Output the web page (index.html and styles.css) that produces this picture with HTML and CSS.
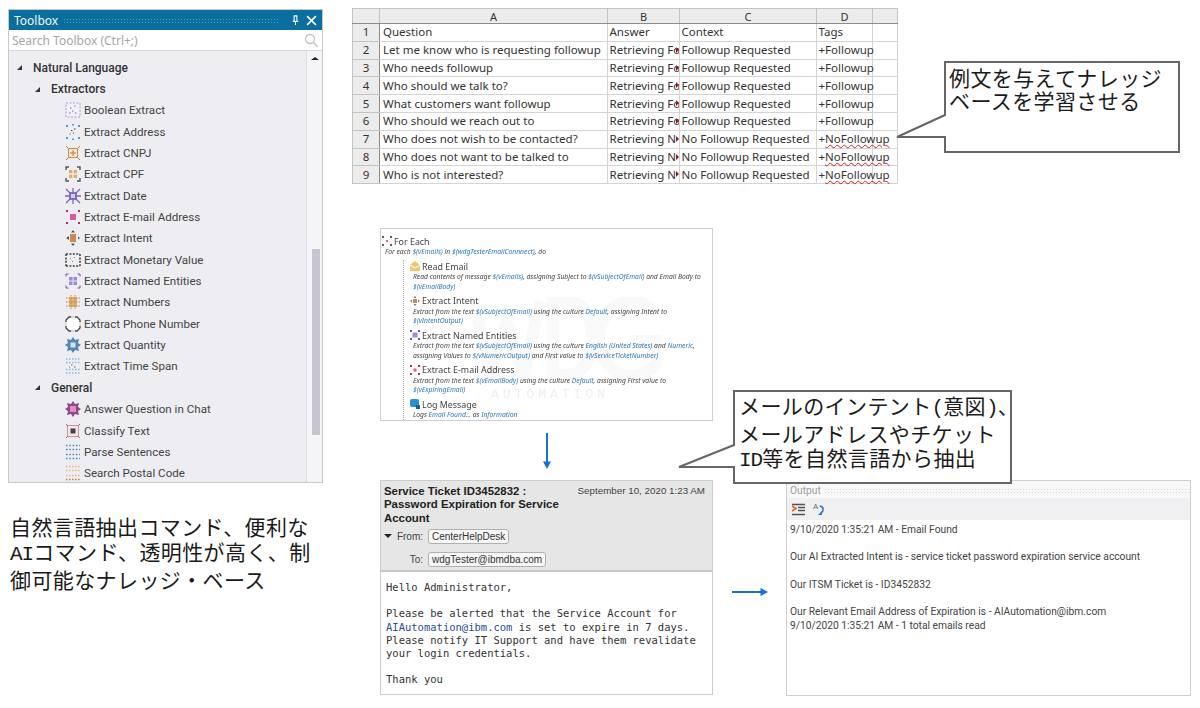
FILE: index.html
```html
<!DOCTYPE html>
<html lang="ja">
<head>
    <meta charset="UTF-8">
    <meta name="viewport" content="width=device-width, initial-scale=1.0">
    <title>Natural Language Toolbox</title>
    <link rel="stylesheet" href="styles.css">
</head>
<body>
<div class="slide">

    <!-- Toolbox window -->
    <section class="toolbox">
        <div class="tb-title">
            <span>Toolbox</span>
            <span class="tb-grip"></span>
            <svg class="tb-btn" viewBox="0 0 10 12"><path d="M3 1h4M3.5 1v6M6.5 1v6M2 7h6M5 7v4" fill="none" stroke="#fff" stroke-width="1.2"/></svg>
            <svg class="tb-btn" viewBox="0 0 10 10"><path d="M1 1l8 8M9 1l-8 8" fill="none" stroke="#fff" stroke-width="1.4"/></svg>
        </div>
        <div class="tb-search">
            <span>Search Toolbox (Ctrl+;)</span>
            <svg class="tb-lens" viewBox="0 0 14 14"><circle cx="6" cy="6" r="4.5" fill="none" stroke="#c4c4c4" stroke-width="1.3"/><path d="M9.5 9.5l4 4" stroke="#c4c4c4" stroke-width="1.5"/></svg>
        </div>
        <div class="tb-body">
            <div class="tb-list">
                <div class="row l1"><i class="tw"></i>Natural Language</div>
                <div class="row l2"><i class="tw"></i>Extractors</div>
                <div class="row l3"><svg class="ico" viewBox="0 0 16 16"><rect x="1" y="1" width="14" height="14" fill="#f3f0fa" stroke="#a99bd6" stroke-dasharray="2 1.5"/><path d="M5 6h1.5M9 4h1.5M7 9h1.5M10 11h1.5M4 11h1.5" stroke="#7b68b8"/></svg>Boolean Extract</div>
                <div class="row l3"><svg class="ico" viewBox="0 0 16 16"><path d="M1 1h2v2H1zM13 1h2v2h-2zM1 13h2v2H1zM13 13h2v2h-2zM7 0h2v1.5H7zM7 14.5h2V16H7z" fill="#4a9ad4"/><path d="M6 6h1.5v1H6zM9 4.5h1.5v1H9zM8 8.5h1v1H8zM4.5 9.5h1v1h-1z" fill="#444"/></svg>Extract Address</div>
                <div class="row l3"><svg class="ico" viewBox="0 0 16 16"><rect x="3.5" y="3.5" width="9" height="9" fill="#f5e6d2" stroke="#c98b4a"/><path d="M1 1l2 2M15 1l-2 2M1 15l2-2M15 15l-2-2M8 5v6M5 8h6" stroke="#b9793a"/></svg>Extract CNPJ</div>
                <div class="row l3"><svg class="ico" viewBox="0 0 16 16"><rect x="4" y="4" width="8" height="8" fill="#dcae72"/><path d="M8 4v8M4 8h8" stroke="#fff"/><path d="M1 4V1h3M12 1h3v3M1 12v3h3M15 12v3h-3" fill="none" stroke="#555" stroke-width="1.4"/></svg>Extract CPF</div>
                <div class="row l3"><svg class="ico" viewBox="0 0 16 16"><rect x="4" y="4" width="8" height="8" fill="#8b76c6"/><path d="M1 1l14 14M15 1L1 15M8 0v16M0 8h16" stroke="#7a63bd" stroke-width="1.3"/><path d="M6 6h4v4H6z" fill="#d6cdf0"/></svg>Extract Date</div>
                <div class="row l3"><svg class="ico" viewBox="0 0 16 16"><rect x="5" y="5" width="6" height="6" fill="#d2609c"/><path d="M1 1h2v2H1zM13 1h2v2h-2zM1 13h2v2H1zM13 13h2v2h-2z" fill="#a8325f"/></svg>Extract E-mail Address</div>
                <div class="row l3"><svg class="ico" viewBox="0 0 16 16"><rect x="5" y="4" width="6" height="8" fill="#c98b55"/><path d="M8 0l2 2.5H6zM8 16l2-2.5H6zM1 8l3-2v4zM15 8l-2-1.5v3z" fill="#555"/></svg>Extract Intent</div>
                <div class="row l3"><svg class="ico" viewBox="0 0 16 16"><path d="M1 2h14M15 2v12M1 14h14M1 2v12" fill="none" stroke="#444" stroke-width="1.6" stroke-dasharray="2 1.4"/><path d="M5 6h1v1H5zM9 5h1v1H9zM7 9h1v1H7z" fill="#888"/></svg>Extract Monetary Value</div>
                <div class="row l3"><svg class="ico" viewBox="0 0 16 16"><rect x="4" y="4" width="8" height="8" fill="#9e8ed6"/><path d="M8 4v8M4 8h8" stroke="#e8e2f7"/><path d="M1 1h2.5M1 1v2.5M15 1h-2.5M15 1v2.5M1 15h2.5M1 15v-2.5M15 15h-2.5M15 15v-2.5" stroke="#6a52b3"/></svg>Extract Named Entities</div>
                <div class="row l3"><svg class="ico" viewBox="0 0 16 16"><rect x="4" y="3" width="8" height="10" fill="#e2b377"/><path d="M1 4h14M1 8h14M1 12h14M6 1v14M10 1v14" stroke="#c48a3f" stroke-dasharray="1.5 1"/></svg>Extract Numbers</div>
                <div class="row l3"><svg class="ico" viewBox="0 0 16 16"><path d="M4 1h8l3 3v8l-3 3H4l-3-3V4z" fill="#fff" stroke="#444" stroke-width="1.3"/><path d="M6 1h4M6 15h4M1 6v4M15 6v4" stroke="#fff" stroke-width="1.5"/></svg>Extract Phone Number</div>
                <div class="row l3"><svg class="ico" viewBox="0 0 16 16"><path d="M8 0l2 3 4-1-1 4 3 2-3 2 1 4-4-1-2 3-2-3-4 1 1-4-3-2 3-2-1-4 4 1z" fill="#4f86b5"/><rect x="5.5" y="5.5" width="5" height="5" fill="#d6e6f3"/></svg>Extract Quantity</div>
                <div class="row l3"><svg class="ico" viewBox="0 0 16 16"><path d="M1 1h14M1 4.5h14M1 11.5h14M1 15h14" stroke="#8fb9dc" stroke-width="1.4" stroke-dasharray="1.5 1.5"/><path d="M6 7h1.5M9 9h1.5M4 9h1" stroke="#777"/></svg>Extract Time Span</div>
                <div class="row l2"><i class="tw"></i><span>General</span></div>
                <div class="row l3"><svg class="ico" viewBox="0 0 16 16"><path d="M8 0l2 3 4-1-1 4 3 2-3 2 1 4-4-1-2 3-2-3-4 1 1-4-3-2 3-2-1-4 4 1z" fill="#8a4a90"/><rect x="5" y="5" width="6" height="6" fill="#e58cb8"/></svg>Answer Question in Chat</div>
                <div class="row l3"><svg class="ico" viewBox="0 0 16 16"><rect x="2.5" y="2.5" width="11" height="11" fill="#f7e7ea" stroke="#cf8fa0"/><rect x="5.5" y="5.5" width="5" height="5" fill="#444"/><path d="M1 1l2 2M15 1l-2 2M1 15l2-2M15 15l-2-2" stroke="#a8607a"/></svg>Classify Text</div>
                <div class="row l3"><svg class="ico" viewBox="0 0 16 16"><path d="M1 1.5h14M1 5.5h14M1 10.5h14M1 14.5h14" stroke="#4a82b8" stroke-width="1.4" stroke-dasharray="1.5 1.8"/></svg>Parse Sentences</div>
                <div class="row l3"><svg class="ico" viewBox="0 0 16 16"><path d="M1 1.5h14M1 5.5h14M1 10.5h14" stroke="#e0b98a" stroke-width="1.3" stroke-dasharray="1.5 1.5"/><path d="M1 14.5h14" stroke="#c07f38" stroke-width="1.4" stroke-dasharray="1.5 1.5"/></svg>Search Postal Code</div>
            </div>
            <div class="tb-scroll">
                <i class="sc-up"></i>
                <div class="sc-thumb"></div>
            </div>
        </div>
    </section>

    <p class="caption">自然言語抽出コマンド、便利な<br><span class="lat">AI</span>コマンド、透明性が高く、制<br>御可能なナレッジ・ベース</p>

    <!-- Knowledge base spreadsheet -->
    <table class="sheet">
        <colgroup>
            <col class="c-n"><col class="c-a"><col class="c-b"><col class="c-c"><col class="c-d"><col class="c-e">
        </colgroup>
        <tr class="head"><th></th><th>A</th><th>B</th><th>C</th><th>D</th><th></th></tr>
        <tr><th>1</th><td>Question</td><td>Answer</td><td>Context</td><td>Tags</td><td></td></tr>
        <tr><th>2</th><td>Let me know who is requesting followup</td><td class="cut">Retrieving Fo</td><td>Followup Requested</td><td>+Followup</td><td></td></tr>
        <tr><th>3</th><td>Who needs followup</td><td class="cut">Retrieving Fo</td><td>Followup Requested</td><td>+Followup</td><td></td></tr>
        <tr><th>4</th><td>Who should we talk to?</td><td class="cut">Retrieving Fo</td><td>Followup Requested</td><td>+Followup</td><td></td></tr>
        <tr><th>5</th><td>What customers want followup</td><td class="cut">Retrieving Fo</td><td>Followup Requested</td><td>+Followup</td><td></td></tr>
        <tr><th>6</th><td>Who should we reach out to</td><td class="cut">Retrieving Fo</td><td>Followup Requested</td><td>+Followup</td><td></td></tr>
        <tr><th>7</th><td>Who does not wish to be contacted?</td><td class="cut">Retrieving N</td><td>No Followup Requested</td><td>+<span class="typo">NoFollowup</span></td><td></td></tr>
        <tr><th>8</th><td>Who does not want to be talked to</td><td class="cut">Retrieving N</td><td>No Followup Requested</td><td>+<span class="typo">NoFollowup</span></td><td></td></tr>
        <tr><th>9</th><td>Who is not interested?</td><td class="cut">Retrieving N</td><td>No Followup Requested</td><td>+<span class="typo">NoFollowup</span></td><td></td></tr>
    </table>

    <div class="callout call-a">
        <svg class="call-shape" width="234" height="90"><path d="M0 0H234V90H0V75L-48 75L0 53Z"/></svg>
        <p>例文を与えてナレッジ<br>ベースを学習させる</p>
    </div>

    <!-- Workflow steps -->
    <section class="flow">
        <svg class="wm-logo" width="190" height="84" viewBox="0 0 190 84"><path d="M3 4l16 74 17-52 17 52 16-74M82 4v74h14c34 0 34-74 0-74zM186 16c-24-24-58-8-58 26s36 50 58 24V44h-24" fill="none" stroke="#f9f9f9" stroke-width="12"/></svg>
        <div class="wm">AUTOMATION</div>
        <div class="step">
            <h4><svg class="ico-s" viewBox="0 0 10 10"><path d="M0 0h2v2H0zM8 0h2v2H8zM0 8h2v2H0zM8 8h2v2H8z" fill="#5a5a8a"/><path d="M4 4h2v2H4z" fill="#d2609c"/></svg>For Each</h4>
            <p>For each <b>$(vEmails)</b> in <b>$(wdgTesterEmailConnnect)</b>, do</p>
        </div>
        <div class="steps">
            <div class="step">
                <h4><svg class="ico-s" viewBox="0 0 10 10"><path d="M0 4l5-4 5 4v6H0z" fill="#f2c46d"/><path d="M0 4l5 3 5-3" fill="none" stroke="#fff"/></svg>Read Email</h4>
                <p>Read contents of message <b>$(vEmails)</b>, assigning Subject to <b>$(vSubjectOfEmail)</b> and Email Body to<br><b>$(vEmailBody)</b></p>
            </div>
            <div class="step">
                <h4><svg class="ico-s" viewBox="0 0 10 10"><rect x="3" y="3" width="4" height="4" fill="#c98b55"/><path d="M5 0l1.5 2h-3zM5 10l1.5-2h-3zM0 5l2-1.5v3zM10 5L8 3.5v3z" fill="#777"/></svg>Extract Intent</h4>
                <p>Extract from the text <b>$(vSubjectOfEmail)</b> using the culture <b>Default</b>, assigning Intent to<br><b>$(vIntentOutput)</b></p>
            </div>
            <div class="step">
                <h4><svg class="ico-s" viewBox="0 0 10 10"><rect x="2.5" y="2.5" width="5" height="5" fill="#9e8ed6"/><path d="M0 0h2v2H0zM8 0h2v2H8zM0 8h2v2H0zM8 8h2v2H8z" fill="#6a52b3"/></svg>Extract Named Entities</h4>
                <p>Extract from the text <b>$(vSubjectOfEmail)</b> using the culture <b>English (United States)</b> and <b>Numeric</b>,<br>assigning Values to <b>$(vNumericOutput)</b> and First value to <b>$(vServiceTicketNumber)</b></p>
            </div>
            <div class="step">
                <h4><svg class="ico-s" viewBox="0 0 10 10"><rect x="3.5" y="3.5" width="3" height="3" fill="#d2609c"/><path d="M0 0h2v2H0zM8 0h2v2H8zM0 8h2v2H0zM8 8h2v2H8z" fill="#a8325f"/></svg>Extract E-mail Address</h4>
                <p>Extract from the text <b>$(vEmailBody)</b> using the culture <b>Default</b>, assigning First value to<br><b>$(vExpiringEmail)</b></p>
            </div>
            <div class="step">
                <h4><svg class="ico-s" viewBox="0 0 10 10"><rect width="9" height="8" rx="2" fill="#2a8fd0"/><rect x="6" y="6" width="4" height="4" fill="#1b5f96"/></svg>Log Message</h4>
                <p>Logs <b>Email Found...</b> as <b>Information</b></p>
            </div>
        </div>
    </section>

    <svg class="arrow arrow-down" width="12" height="36" viewBox="0 0 12 36"><path d="M6 0V30" stroke="#1a6fd0" stroke-width="2"/><path d="M2 28.5h8L6 36z" fill="#1a6fd0"/></svg>
    <svg class="arrow arrow-right" width="36" height="10" viewBox="0 0 36 10"><path d="M0 5H30" stroke="#1a6fd0" stroke-width="2"/><path d="M28.5 1v8L36 5z" fill="#1a6fd0"/></svg>

    <!-- Email preview -->
    <section class="mail">
        <div class="mail-head">
            <div class="mail-top">
                <h3>Service Ticket ID3452832 :<br>Password Expiration for Service<br>Account</h3>
                <span class="mail-date">September 10, 2020 1:23 AM</span>
            </div>
            <div class="mail-line from"><i class="drop"></i><label>From:</label><span class="chip">CenterHelpDesk</span></div>
            <div class="mail-line to"><label>To:</label><span class="chip">wdgTester@ibmdba.com</span></div>
        </div>
        <div class="mail-body">
            <p>Hello Administrator,</p>
            <p>Please be alerted that the Service Account for<br><a>AIAutomation@ibm.com</a> is set to expire in 7 days.<br>Please notify IT Support and have them revalidate<br>your login credentials.</p>
            <p>Thank you</p>
        </div>
    </section>

    <!-- Output window -->
    <section class="output">
        <div class="out-title"><span>Output</span><span class="out-grip"></span></div>
        <div class="out-tools">
            <svg width="13" height="13" viewBox="0 0 13 13"><path d="M0 1.5h13M6 4.5h7M6 7.5h7M0 11.5h13" stroke="#555" stroke-width="1.5"/><path d="M0 3l4 2.5L0 8" fill="none" stroke="#d2691e" stroke-width="1.5"/></svg>
            <svg width="12" height="14" viewBox="0 0 12 14"><text x="0" y="7" class="out-a">A</text><path d="M7 4c4 1 4 5 1 7" fill="none" stroke="#2a78c0" stroke-width="1.5"/><path d="M9 9v4H5z" fill="#2a78c0"/></svg>
        </div>
        <div class="out-text">
            <p>9/10/2020 1:35:21 AM - Email Found</p>
            <p>Our AI Extracted Intent is - service ticket password expiration service account</p>
            <p>Our ITSM Ticket is - ID3452832</p>
            <p class="tight">Our Relevant Email Address of Expiration is - AIAutomation@ibm.com</p>
            <p>9/10/2020 1:35:21 AM - 1 total emails read</p>
        </div>
    </section>

    <div class="callout call-b">
        <svg class="call-shape" width="277" height="92"><path d="M0 0H277V92H0V76L-55 76L0 54Z"/></svg>
        <p>メールのインテント<span class="lat">(</span>意図<span class="lat">)</span>、<br>メールアドレスやチケット<br><span class="lat">ID</span>等を自然言語から抽出</p>
    </div>

</div>
</body>
</html>
```

FILE: styles.css
```css
* {
    box-sizing: border-box;
}

body {
    margin: 0;
    background-color: white;
}

p, h3, h4 {
    margin: 0;
    font-weight: normal;
}

.slide {
    position: relative;
    width: 1200px;
    height: 708px;
    overflow: hidden;
    font-family: "Noto Sans", sans-serif;
    color: #333;
}

/* Toolbox */
.toolbox {
    position: absolute;
    left: 8px;
    top: 9px;
    width: 315px;
    height: 474px;
    display: flex;
    flex-direction: column;
    border: 1px solid #c8c8cc;
    background-color: #eeeef2;
}

.tb-title {
    display: flex;
    align-items: center;
    gap: 5px;
    height: 20px;
    padding: 0 5px;
    background-color: #0a6f9e;
    color: #f2f8fb;
    font-size: 12px;
}

.tb-grip {
    flex: 1;
    height: 5px;
    margin-right: 5px;
    background-image: radial-gradient(#5a9cbc 40%, transparent 45%);
    background-size: 3px 3px;
}

.tb-btn {
    width: 11px;
    height: 11px;
}

.tb-search {
    display: flex;
    align-items: center;
    justify-content: space-between;
    height: 21px;
    padding: 0 4px 0 3px;
    background-color: white;
    border-bottom: 1px solid #d8d8dc;
    color: #a6a6a6;
    font-size: 12px;
}

.tb-lens {
    width: 14px;
    height: 14px;
}

.tb-body {
    flex: 1;
    display: flex;
    min-height: 0;
}

.tb-list {
    flex: 1;
    padding-top: 6px;
    overflow: hidden;
    font-family: Roboto, sans-serif;
    font-size: 12px;
}

.row {
    display: flex;
    align-items: center;
    height: 21.35px;
    white-space: nowrap;
}

.l1 {
    padding-left: 8px;
    font-weight: 500;
}

.l2 {
    padding-left: 26px;
    font-weight: 500;
}

.l3 {
    padding-left: 56px;
    font-size: 11.6px;
    color: #444;
}

.tw {
    width: 0;
    height: 0;
    margin-right: 11px;
    border-left: 5px solid transparent;
    border-bottom: 5px solid #333;
}

.ico {
    flex: none;
    width: 16px;
    height: 16px;
    margin-right: 3px;
}

.tb-scroll {
    width: 16px;
    display: flex;
    flex-direction: column;
    align-items: center;
    background-color: #f5f5f7;
    border-left: 1px solid #dcdce0;
}

.sc-up {
    margin-top: 6px;
    border-left: 4px solid transparent;
    border-right: 4px solid transparent;
    border-bottom: 3px solid #222;
}

.sc-thumb {
    width: 8px;
    height: 186px;
    margin-top: 189px;
    margin-left: 2px;
    background-color: #c6c6d0;
}

/* Japanese captions */
.caption,
.callout p {
    font-family: "Noto Sans CJK JP", sans-serif;
    font-size: 21px;
    letter-spacing: 0.4px;
    color: #1a1a1a;
    white-space: nowrap;
}

.lat {
    font-family: "Liberation Mono", monospace;
    letter-spacing: -1px;
}

.caption {
    position: absolute;
    left: 10px;
    top: 514px;
    line-height: 25px;
}

.callout {
    position: absolute;
}

.call-shape {
    position: absolute;
    left: 0;
    top: 0;
    overflow: visible;
}

.call-shape path {
    fill: white;
    stroke: #666;
    stroke-width: 2;
}

.callout p {
    position: relative;
}

.call-a {
    left: 945px;
    top: 62px;
    width: 234px;
    height: 90px;
    padding: 4px 0 0 4px;
}

.call-a p {
    line-height: 23px;
}

.call-b {
    left: 734px;
    top: 391px;
    width: 277px;
    height: 92px;
    padding: 2px 0 0 5px;
}

.call-b p {
    line-height: 24px;
}

/* Spreadsheet */
.sheet {
    position: absolute;
    left: 352px;
    top: 8px;
    width: 545px;
    table-layout: fixed;
    border-collapse: collapse;
    font-size: 11.5px;
    color: #333;
}

.c-n { width: 27px; }
.c-a { width: 228px; }
.c-b { width: 72px; }
.c-c { width: 137px; }
.c-d { width: 56px; }
.c-e { width: 25px; }

.sheet tr {
    height: 17.8px;
}

.sheet tr.head {
    height: 15px;
}

.sheet th,
.sheet td {
    padding: 0 1.5px;
    border: 1px solid #d4d4d4;
    font-weight: normal;
    white-space: nowrap;
    line-height: 14px;
}

.sheet td:nth-child(2) {
    padding-left: 3px;
}

.sheet th {
    text-align: center;
    background-color: #ececec;
    border-color: #c4c4c4;
    border-right-color: #8c8c8c;
}

.sheet .head th {
    background-color: #ececec;
    border-bottom-color: #8c8c8c;
    border-right-color: #c4c4c4;
    font-size: 11px;
    line-height: 13px;
}

.sheet td.cut {
    position: relative;
    overflow: hidden;
}

.sheet td.cut::after {
    content: "";
    position: absolute;
    right: 0;
    top: 5px;
    border-top: 3px solid transparent;
    border-bottom: 3px solid transparent;
    border-left: 3px solid #8b1a1a;
}

.typo {
    text-decoration: underline wavy #d02020 1px;
    text-underline-offset: 1px;
}

/* Workflow */
.flow {
    position: absolute;
    left: 380px;
    top: 228px;
    width: 333px;
    height: 193px;
    padding: 6px 0 0 4px;
    border: 1px solid #cfcfcf;
    overflow: hidden;
    background-color: white;
    filter: blur(0.35px);
}

.wm-logo {
    position: absolute;
    left: 90px;
    top: 68px;
}

.wm {
    position: absolute;
    left: 110px;
    top: 162px;
    font-family: "Liberation Mono", monospace;
    font-size: 13px;
    line-height: 8px;
    letter-spacing: 4px;
    color: #efefef;
}

.steps {
    position: relative;
    margin: 0.5px 0 0 18px;
    padding-left: 9px;
    border-left: 1px dotted #b0b0b0;
    height: 170px;
}

.step {
    position: relative;
    margin-bottom: 3.5px;
}

.step h4 {
    display: flex;
    align-items: center;
    gap: 2px;
    margin-left: -3px;
    height: 12px;
    font-size: 8.9px;
    color: #444;
}

.ico-s {
    width: 10px;
    height: 10px;
}

.step p {
    font-size: 6.75px;
    line-height: 9.5px;
    font-style: italic;
    color: #444;
    white-space: nowrap;
}

.step p b {
    font-weight: normal;
    color: #2b78b8;
}

.arrow {
    position: absolute;
}

.arrow-down {
    left: 541px;
    top: 433px;
}

.arrow-right {
    left: 732px;
    top: 587px;
}

/* Email */
.mail {
    position: absolute;
    left: 380px;
    top: 480px;
    width: 333px;
    height: 215px;
    border: 1px solid #cccccc;
    font-family: "Liberation Sans", sans-serif;
}

.mail-head {
    height: 91px;
    padding: 4px 7px 0 3px;
    background-color: #e6e6e6;
    border-bottom: 2px solid #c8c8c8;
}

.mail-top {
    display: flex;
    justify-content: space-between;
}

.mail-top h3 {
    font-size: 11.4px;
    font-weight: bold;
    line-height: 13.3px;
    color: #222;
}

.mail-date {
    font-size: 9.8px;
    color: #444;
    line-height: 11px;
}

.mail-line {
    display: flex;
    align-items: center;
    font-size: 10px;
}

.from {
    margin-top: 4px;
}

.to {
    margin-top: 8px;
}

.mail-line label {
    color: #444;
    text-align: right;
    padding-right: 5px;
}

.from label {
    width: 36px;
}

.to label {
    width: 44px;
}

.drop {
    width: 8px;
    border-top: 4px solid #222;
    border-left: 4px solid transparent;
    border-right: 4px solid transparent;
}

.chip {
    padding: 0 3px;
    border: 1px solid #b0b0b0;
    border-radius: 3px;
    background-color: #f6f6f6;
    line-height: 13px;
    color: #333;
}

.mail-body {
    padding: 9px 5px 0;
    font-family: "DejaVu Sans Mono", monospace;
    font-size: 10.5px;
    line-height: 13.2px;
    color: #333;
}

.mail-body p {
    margin-bottom: 13.2px;
}

.mail-body a {
    color: #2a4d8f;
}

/* Output */
.output {
    position: absolute;
    left: 786px;
    top: 480px;
    width: 405px;
    height: 216px;
    border: 1px solid #cfcfcf;
    font-family: Roboto, sans-serif;
    font-size: 10.25px;
    color: #444;
}

.out-title {
    display: flex;
    align-items: center;
    gap: 3px;
    height: 17px;
    padding: 2px 0 0 3px;
    background-color: #f8f8f9;
    color: #a0a0a0;
}

.out-grip {
    flex: 1;
    height: 5px;
    background-image: radial-gradient(#d8d8dc 40%, transparent 45%);
    background-size: 3px 3px;
}

.out-tools {
    display: flex;
    align-items: center;
    gap: 8px;
    height: 22px;
    padding-left: 5px;
    background-color: #f0f0f3;
}

.out-a {
    font-size: 8px;
    fill: #666;
}

.out-text {
    padding: 3px 0 0 3px;
    line-height: 13.7px;
    white-space: nowrap;
}

.out-text p {
    margin-bottom: 13.7px;
}

.out-text p.tight {
    margin-bottom: 0;
}
```
